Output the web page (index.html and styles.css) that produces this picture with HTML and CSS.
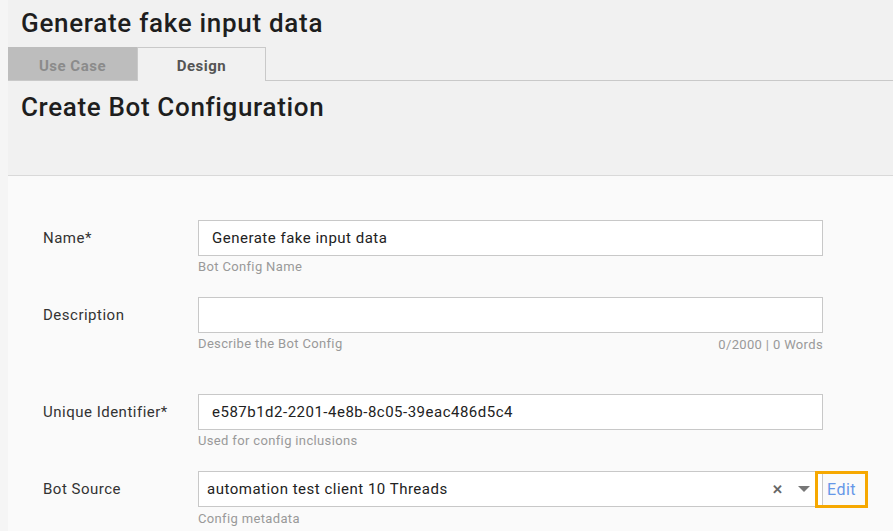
FILE: index.html
```html
<!DOCTYPE html>
<html lang="en">
<head>
<meta charset="utf-8">
<title>Generate fake input data</title>
<link rel="stylesheet" href="styles.css">
</head>
<body>
<div class="page">
  <header class="page-head">
    <h1 class="page-title">Generate fake input data</h1>
    <nav class="tabs">
      <span class="tab tab-off">Use Case</span>
      <span class="tab tab-on">Design</span>
      <span class="tab-rest"></span>
    </nav>
    <h2 class="section-title">Create Bot Configuration</h2>
  </header>

  <form class="config-form">
    <div class="row">
      <label class="label">Name*</label>
      <div class="field">
        <div class="input">Generate fake input data</div>
        <div class="help">Bot Config Name</div>
      </div>
    </div>

    <div class="row row-desc">
      <label class="label">Description</label>
      <div class="field">
        <div class="input"></div>
        <div class="help help-split"><span>Describe the Bot Config</span><span class="counter">0/2000 | 0 Words</span></div>
      </div>
    </div>

    <div class="row">
      <label class="label">Unique Identifier*</label>
      <div class="field">
        <div class="input">e587b1d2-2201-4e8b-8c05-39eac486d5c4</div>
        <div class="help">Used for config inclusions</div>
      </div>
    </div>

    <div class="row">
      <label class="label">Bot Source</label>
      <div class="field">
        <div class="select-line">
          <div class="select">
            <span class="select-value">automation test client 10 Threads</span>
            <span class="select-clear">&#x2715;</span>
            <svg class="select-arrow" width="12" height="7" viewBox="0 0 12 7"><path d="M0 0h12L6 6z" fill="#777"/></svg>
          </div>
          <button type="button" class="edit-btn">Edit</button>
        </div>
        <div class="help">Config metadata</div>
      </div>
    </div>
  </form>
</div>
</body>
</html>
```

FILE: styles.css
```css
html, body {
  margin: 0;
  padding: 0;
}

body {
  background: #f5f5f5;
  font-family: Roboto, "Noto Sans", sans-serif;
  color: #222;
  height: 531px;
  overflow: hidden;
}

.page {
  margin-left: 8px;
  min-height: 531px;
  background: #fafafa;
}

.page-head {
  background: #f1f1f1;
  border-bottom: 1px solid #d9d9d9;
  height: 175px;
}

.page-title {
  margin: 0;
  padding: 7px 0 0 13px;
  height: 47px;
  box-sizing: border-box;
  font-size: 26px;
  font-weight: 500;
  letter-spacing: 0.7px;
  line-height: 32px;
  color: #1e1e1e;
}

.tabs {
  display: flex;
  height: 34px;
}

.tab {
  width: 129px;
  box-sizing: border-box;
  font-size: 15px;
  font-weight: 700;
  letter-spacing: 0.5px;
  text-align: center;
  line-height: 37px;
}

.tab-off {
  background: #bdbdbd;
  color: #8b8b8b;
  border-bottom: 1px solid #c9c9c9;
  padding-top: 1px;
}

.tab-on {
  background: #f1f1f1;
  color: #555;
  border: 1px solid #c9c9c9;
  border-bottom: none;
}

.tab-rest {
  flex: 1;
  border-bottom: 1px solid #c9c9c9;
}

.section-title {
  margin: 0;
  padding: 10px 0 0 13px;
  font-size: 26px;
  font-weight: 500;
  letter-spacing: 0.65px;
  line-height: 32px;
  color: #1e1e1e;
}

.config-form {
  padding: 44px 70px 0 35px;
}

.row {
  display: grid;
  grid-template-columns: 155px 625px;
  margin-bottom: 22px;
}

.row-desc {
  margin-bottom: 41px;
}

.label {
  font-size: 15px;
  letter-spacing: 0.5px;
  color: #333;
  line-height: 36px;
}

.field {
  display: flex;
  flex-direction: column;
}

.input {
  height: 36px;
  box-sizing: border-box;
  border: 1px solid #c8c8c8;
  background: #fff;
  padding: 0 13px;
  font-size: 15px;
  letter-spacing: 0.5px;
  line-height: 34px;
  color: #222;
}

.help {
  font-size: 13px;
  letter-spacing: 0.35px;
  color: #999;
  line-height: 16px;
  margin-top: 3px;
}

.help-split {
  display: flex;
  justify-content: space-between;
}

.counter {
  color: #999;
  margin-top: 1px;
}

.select-line {
  display: flex;
  align-items: flex-start;
}

.select {
  flex: none;
  width: 625px;
  height: 36px;
  box-sizing: border-box;
  border: 1px solid #c8c8c8;
  background: #fff;
  display: flex;
  align-items: center;
  padding: 0 4px 0 8px;
  font-size: 15px;
  letter-spacing: 0.5px;
  color: #222;
}

.select-value {
  flex: 1;
}

.select-clear {
  font-size: 13px;
  color: #666;
  margin-right: 15px;
  font-weight: 700;
}

.select-arrow {
  margin-right: 8px;
}

.edit-btn {
  position: relative;
  flex: none;
  margin-left: -8px;
  width: 53px;
  height: 37px;
  box-sizing: border-box;
  border: 3px solid #f6a800;
  background: transparent;
  font-family: Roboto, "Noto Sans", sans-serif;
  font-size: 16px;
  letter-spacing: 0.5px;
  color: #6597e8;
  padding: 0 0 0 9px;
  text-align: left;
  cursor: pointer;
}
```
